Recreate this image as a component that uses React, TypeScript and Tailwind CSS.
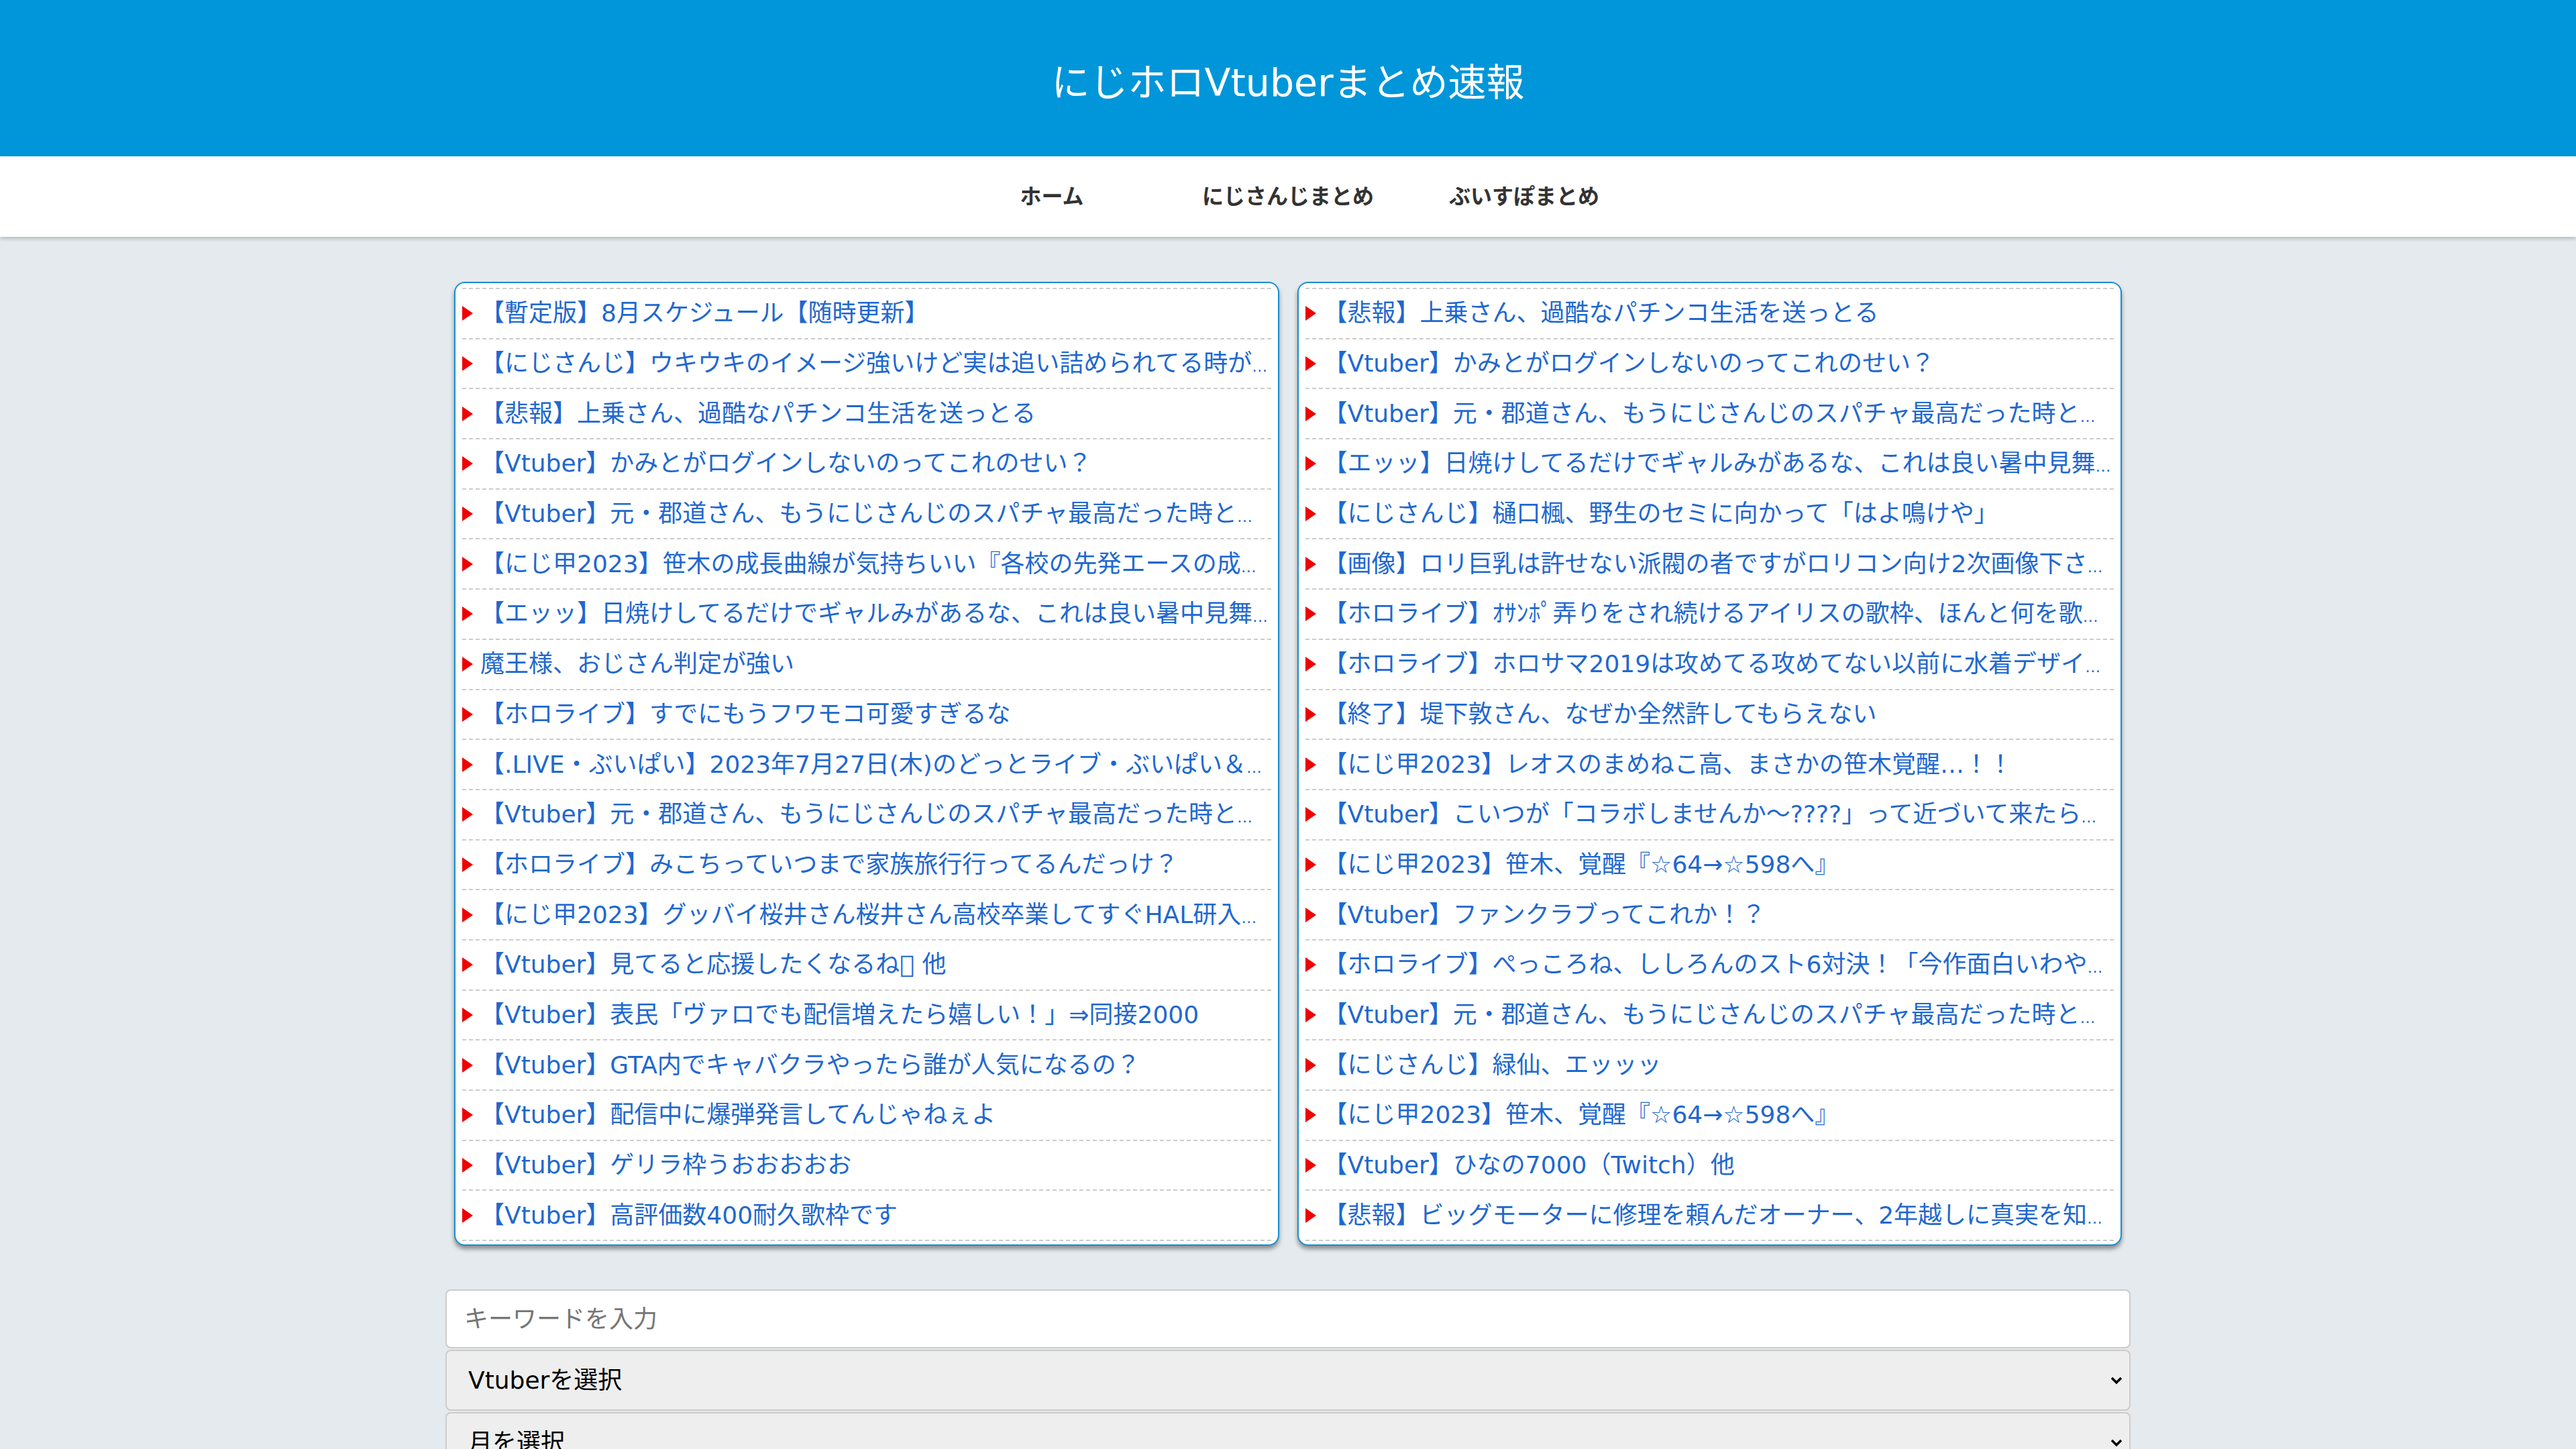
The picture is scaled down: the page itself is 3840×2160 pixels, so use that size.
const font = "font-['DejaVu_Sans','Noto_Sans_CJK_JP',sans-serif]";

// titles cut in the list end with a trailing "…"
const leftItems = [
	"【暫定版】8月スケジュール【随時更新】",
	"【にじさんじ】ウキウキのイメージ強いけど実は追い詰められてる時が…",
	"【悲報】上乗さん、過酷なパチンコ生活を送っとる",
	"【Vtuber】かみとがログインしないのってこれのせい？",
	"【Vtuber】元・郡道さん、もうにじさんじのスパチャ最高だった時と…",
	"【にじ甲2023】笹木の成長曲線が気持ちいい『各校の先発エースの成…",
	"【エッッ】日焼けしてるだけでギャルみがあるな、これは良い暑中見舞…",
	"魔王様、おじさん判定が強い",
	"【ホロライブ】すでにもうフワモコ可愛すぎるな",
	"【.LIVE・ぶいぱい】2023年7月27日(木)のどっとライブ・ぶいぱい＆…",
	"【Vtuber】元・郡道さん、もうにじさんじのスパチャ最高だった時と…",
	"【ホロライブ】みこちっていつまで家族旅行行ってるんだっけ？",
	"【にじ甲2023】グッバイ桜井さん桜井さん高校卒業してすぐHAL研入…",
	"【Vtuber】見てると応援したくなるね\u{E000} 他",
	"【Vtuber】表民「ヴァロでも配信増えたら嬉しい！」⇒同接2000",
	"【Vtuber】GTA内でキャバクラやったら誰が人気になるの？",
	"【Vtuber】配信中に爆弾発言してんじゃねぇよ",
	"【Vtuber】ゲリラ枠うおおおおお",
	"【Vtuber】高評価数400耐久歌枠です",
];

const rightItems = [
	"【悲報】上乗さん、過酷なパチンコ生活を送っとる",
	"【Vtuber】かみとがログインしないのってこれのせい？",
	"【Vtuber】元・郡道さん、もうにじさんじのスパチャ最高だった時と…",
	"【エッッ】日焼けしてるだけでギャルみがあるな、これは良い暑中見舞…",
	"【にじさんじ】樋口楓、野生のセミに向かって「はよ鳴けや」",
	"【画像】ロリ巨乳は許せない派閥の者ですがロリコン向け2次画像下さ…",
	"【ホロライブ】ｵｻﾝﾎﾟ弄りをされ続けるアイリスの歌枠、ほんと何を歌…",
	"【ホロライブ】ホロサマ2019は攻めてる攻めてない以前に水着デザイ…",
	"【終了】堤下敦さん、なぜか全然許してもらえない",
	"【にじ甲2023】レオスのまめねこ高、まさかの笹木覚醒…！！",
	"【Vtuber】こいつが「コラボしませんか～????」って近づいて来たら…",
	"【にじ甲2023】笹木、覚醒『☆64→☆598へ』",
	"【Vtuber】ファンクラブってこれか！？",
	"【ホロライブ】ぺっころね、ししろんのスト6対決！「今作面白いわや…",
	"【Vtuber】元・郡道さん、もうにじさんじのスパチャ最高だった時と…",
	"【にじさんじ】緑仙、エッッッ",
	"【にじ甲2023】笹木、覚醒『☆64→☆598へ』",
	"【Vtuber】ひなの7000（Twitch）他",
	"【悲報】ビッグモーターに修理を頼んだオーナー、2年越しに真実を知…",
];

const navItems = ["ホーム", "にじさんじまとめ", "ぶいすぽまとめ"];

const Title = ({ text }: { text: string }) => {
	const cut = text.endsWith("…") && !text.endsWith("醒…");
	if (!cut) return <>{text}</>;
	return (
		<>
			{text.slice(0, -1)}
			<span className="text-[23px]">…</span>
		</>
	);
};

const Panel = ({ items }: { items: string[] }) => (
	<div className="bg-white border-2 border-[#1a8fd0] rounded-[16px] px-[10px] pt-[7px] pb-[5px] shadow-[0_5px_6px_rgba(0,0,0,0.4)] min-w-0">
		<ul className="border-t-2 border-dashed border-[#cccccc]">
			{items.map((text, i) => (
				<li
					key={i}
					className="h-[74.7px] border-b-2 border-dashed border-[#cccccc] flex items-center"
				>
					<span className="shrink-0 w-0 h-0 border-y-[11.5px] border-y-transparent border-l-[16px] border-l-[#ee0000]" />
					<a className="ml-[11px] min-w-0 flex-1 whitespace-nowrap overflow-hidden text-[36px] text-[#1f68cf] leading-none py-2">
						<Title text={text} />
					</a>
				</li>
			))}
		</ul>
	</div>
);

const Chevron = () => (
	<svg
		className="absolute right-[12px] top-1/2 -translate-y-1/2 pointer-events-none"
		width="18"
		height="12"
		viewBox="0 0 18 12"
	>
		<path d="M2 2 L9 9 L16 2" fill="none" stroke="#000" strokeWidth="3.5" />
	</svg>
);

const App = () => {
	return (
		<div className={`min-h-screen bg-[#e5eaee] ${font}`}>
			<header className="h-[233px] bg-[#0096d9] flex items-center justify-center pt-[14px]">
				<h1 className="text-white text-[57px] font-normal">にじホロVtuberまとめ速報</h1>
			</header>
			<nav className="h-[120px] bg-white flex justify-center items-center shadow-[0_3px_6px_rgba(0,0,0,0.2)] relative">
				{navItems.map((item) => (
					<a key={item} className="w-[352px] text-center text-[32px] font-bold text-[#333333]">
						{item}
					</a>
				))}
			</nav>
			<main className="w-[2512px] mx-auto pt-[67px]">
				<div className="grid grid-cols-2 gap-[27px] px-[13px]">
					<Panel items={leftItems} />
					<Panel items={rightItems} />
				</div>
				<form className="mt-[65px] flex flex-col">
					<input
						type="text"
						placeholder="キーワードを入力"
						className="h-[88px] bg-white border-2 border-[#cccccc] rounded-[8px] px-[26px] text-[36px] placeholder:text-[#757575] outline-none"
					/>
					<div className="relative mt-[2px]">
						<select className="w-full h-[91px] appearance-none bg-[#eeeeee] border-2 border-[#cccccc] rounded-[8px] px-[32px] text-[36px] text-black">
							<option>Vtuberを選択</option>
						</select>
						<Chevron />
					</div>
					<div className="relative mt-[2px]">
						<select className="w-full h-[91px] appearance-none bg-[#eeeeee] border-2 border-[#cccccc] rounded-[8px] px-[32px] text-[36px] text-black">
							<option>月を選択</option>
						</select>
						<Chevron />
					</div>
				</form>
			</main>
		</div>
	);
};

export default App;
